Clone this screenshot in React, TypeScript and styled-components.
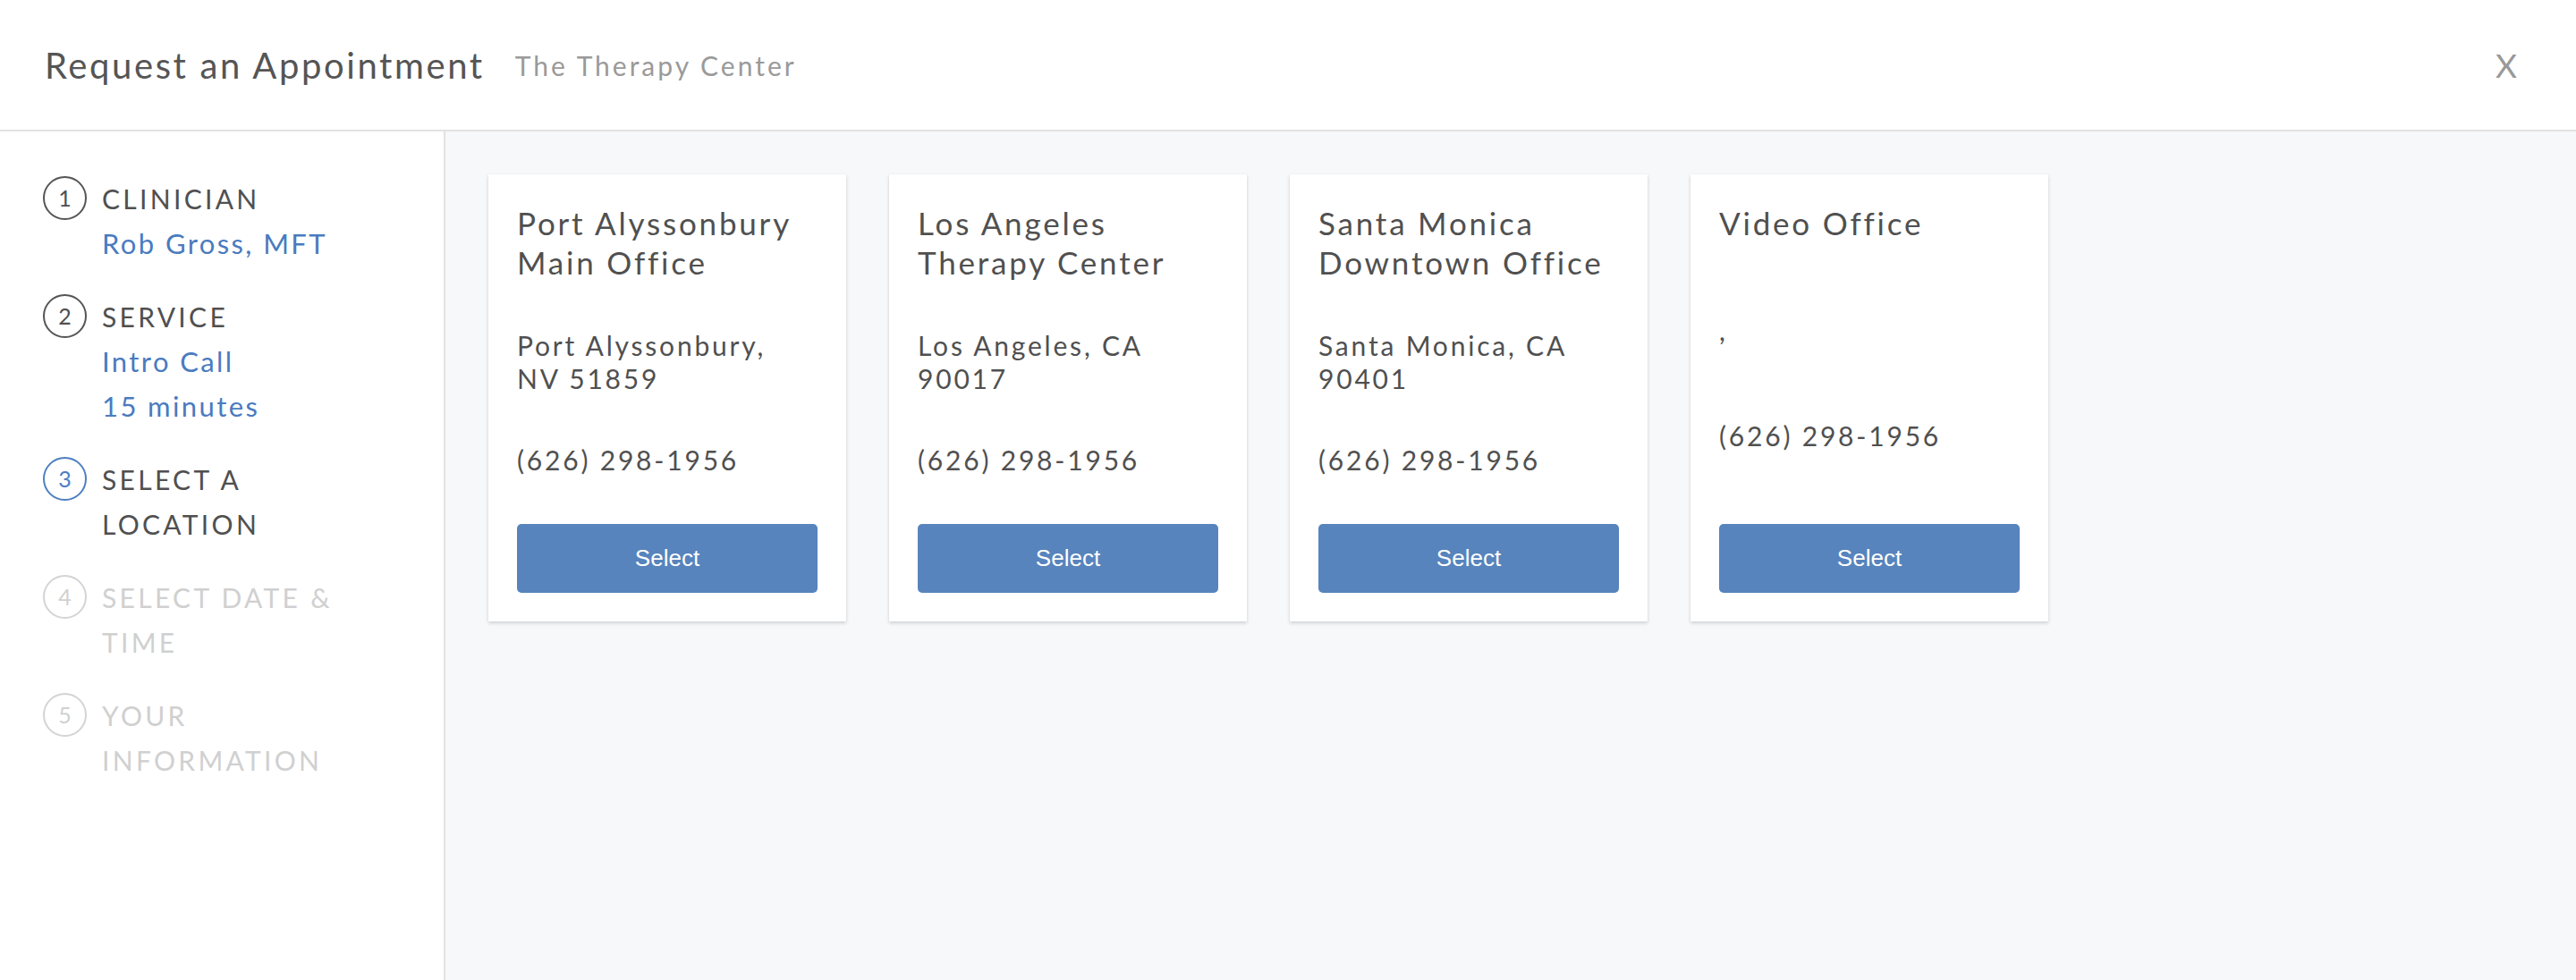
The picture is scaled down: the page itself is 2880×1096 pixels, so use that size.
import React from "react";
import styled, { createGlobalStyle } from "styled-components";

const GlobalStyle = createGlobalStyle`
  html, body {
    margin: 0;
    padding: 0;
    background: #ffffff;
  }
  body {
    font-family: Lato, "Open Sans", "Liberation Sans", sans-serif;
    color: #555555;
  }
  * { box-sizing: border-box; }
`;

const Page = styled.div`
  width: 2880px;
  height: 1096px;
  display: flex;
  flex-direction: column;
  background: #ffffff;
  overflow: hidden;
`;

const Header = styled.header`
  height: 147px;
  flex: 0 0 147px;
  display: flex;
  align-items: center;
  padding: 0 66px 0 50px;
  border-bottom: 2px solid #e2e2e2;
`;

const Title = styled.h1`
  margin: 0;
  font-family: Lato, sans-serif;
  font-weight: 400;
  font-size: 40px;
  letter-spacing: 2.6px;
  color: #555555;
`;

const Subtitle = styled.span`
  margin-left: 34px;
  font-family: Lato, sans-serif;
  font-size: 30px;
  letter-spacing: 3px;
  color: #9a9a9a;
  padding-top: 1px;
`;

const Close = styled.button`
  margin-left: auto;
  border: none;
  background: transparent;
  padding: 0;
  font-family: Lato, sans-serif;
  font-size: 37px;
  font-weight: 400;
  color: #999999;
  cursor: pointer;
  line-height: 1;
`;

const Body = styled.div`
  flex: 1;
  display: flex;
  min-height: 0;
`;

const Sidebar = styled.nav`
  width: 498px;
  flex: 0 0 498px;
  border-right: 2px solid #e2e2e2;
  padding: 50px 0 0 48px;
  display: flex;
  flex-direction: column;
  gap: 32px;
`;

const Step = styled.div`
  display: flex;
  align-items: flex-start;
  gap: 17px;
`;

const Circle = styled.div<{ $state: "done" | "active" | "todo" }>`
  width: 49px;
  height: 49px;
  flex: 0 0 49px;
  border-radius: 50%;
  border: 2px solid
    ${(p) => (p.$state === "active" ? "#4f7fc1" : p.$state === "todo" ? "#d4d4d4" : "#555555")};
  color: ${(p) => (p.$state === "active" ? "#4f7fc1" : p.$state === "todo" ? "#d0d0d0" : "#505050")};
  display: flex;
  align-items: center;
  justify-content: center;
  font-family: Lato, sans-serif;
  font-size: 25px;
  padding-bottom: 1px;
`;

const StepText = styled.div`
  max-width: 300px;
  display: flex;
  flex-direction: column;
`;

const StepLabel = styled.div<{ $muted?: boolean }>`
  font-family: Lato, sans-serif;
  font-size: 30px;
  line-height: 50px;
  letter-spacing: 3.3px;
  text-transform: uppercase;
  color: ${(p) => (p.$muted ? "#d0d0d0" : "#505050")};
`;

const StepValue = styled.div`
  font-family: Lato, sans-serif;
  font-size: 31px;
  line-height: 50px;
  letter-spacing: 2.4px;
  color: #4a7bbf;
`;

const Main = styled.main`
  flex: 1;
  background: #f7f8fa;
  padding: 48px;
  display: flex;
  align-items: flex-start;
  gap: 48px;
`;

const Card = styled.div`
  width: 400px;
  height: 500px;
  background: #ffffff;
  box-shadow: 0 2px 4px rgba(0, 0, 0, 0.16), 0 0 1px rgba(0, 0, 0, 0.08);
  padding: 32px;
  display: flex;
  flex-direction: column;
  justify-content: space-between;
`;

const CardTitle = styled.div`
  font-family: Lato, sans-serif;
  font-size: 35px;
  line-height: 44px;
  letter-spacing: 2.8px;
  color: #505050;
`;

const CardText = styled.div`
  font-family: Lato, sans-serif;
  font-size: 30px;
  line-height: 37px;
  letter-spacing: 2.8px;
  color: #505050;
  padding-right: 8px;
`;

const SelectButton = styled.button`
  height: 77px;
  width: 100%;
  border: none;
  border-radius: 5px;
  background: #5784bd;
  color: #ffffff;
  font-family: "Liberation Sans", Arial, sans-serif;
  font-size: 26px;
  cursor: pointer;
`;

type Loc = { name: string; address: string; phone: string };

const locations: Loc[] = [
  { name: "Port Alyssonbury Main Office", address: "Port Alyssonbury, NV 51859", phone: "(626) 298-1956" },
  { name: "Los Angeles Therapy Center", address: "Los Angeles, CA 90017", phone: "(626) 298-1956" },
  { name: "Santa Monica Downtown Office", address: "Santa Monica, CA 90401", phone: "(626) 298-1956" },
  { name: "Video Office", address: ",", phone: "(626) 298-1956" },
];

type StepDef = { n: number; label: string; values?: string[]; state: "done" | "active" | "todo" };

const steps: StepDef[] = [
  { n: 1, label: "Clinician", values: ["Rob Gross, MFT"], state: "done" },
  { n: 2, label: "Service", values: ["Intro Call", "15 minutes"], state: "done" },
  { n: 3, label: "Select a Location", state: "active" },
  { n: 4, label: "Select Date & Time", state: "todo" },
  { n: 5, label: "Your Information", state: "todo" },
];

export default function App() {
  return (
    <>
      <GlobalStyle />
      <Page>
        <Header>
          <Title>Request an Appointment</Title>
          <Subtitle>The Therapy Center</Subtitle>
          <Close aria-label="Close">X</Close>
        </Header>
        <Body>
          <Sidebar>
            {steps.map((s) => (
              <Step key={s.n}>
                <Circle $state={s.state}>{s.n}</Circle>
                <StepText>
                  <StepLabel $muted={s.state === "todo"}>{s.label}</StepLabel>
                  {s.values?.map((v) => (
                    <StepValue key={v}>{v}</StepValue>
                  ))}
                </StepText>
              </Step>
            ))}
          </Sidebar>
          <Main>
            {locations.map((l) => (
              <Card key={l.name}>
                <CardTitle>{l.name}</CardTitle>
                <CardText>{l.address}</CardText>
                <CardText>{l.phone}</CardText>
                <SelectButton>Select</SelectButton>
              </Card>
            ))}
          </Main>
        </Body>
      </Page>
    </>
  );
}
